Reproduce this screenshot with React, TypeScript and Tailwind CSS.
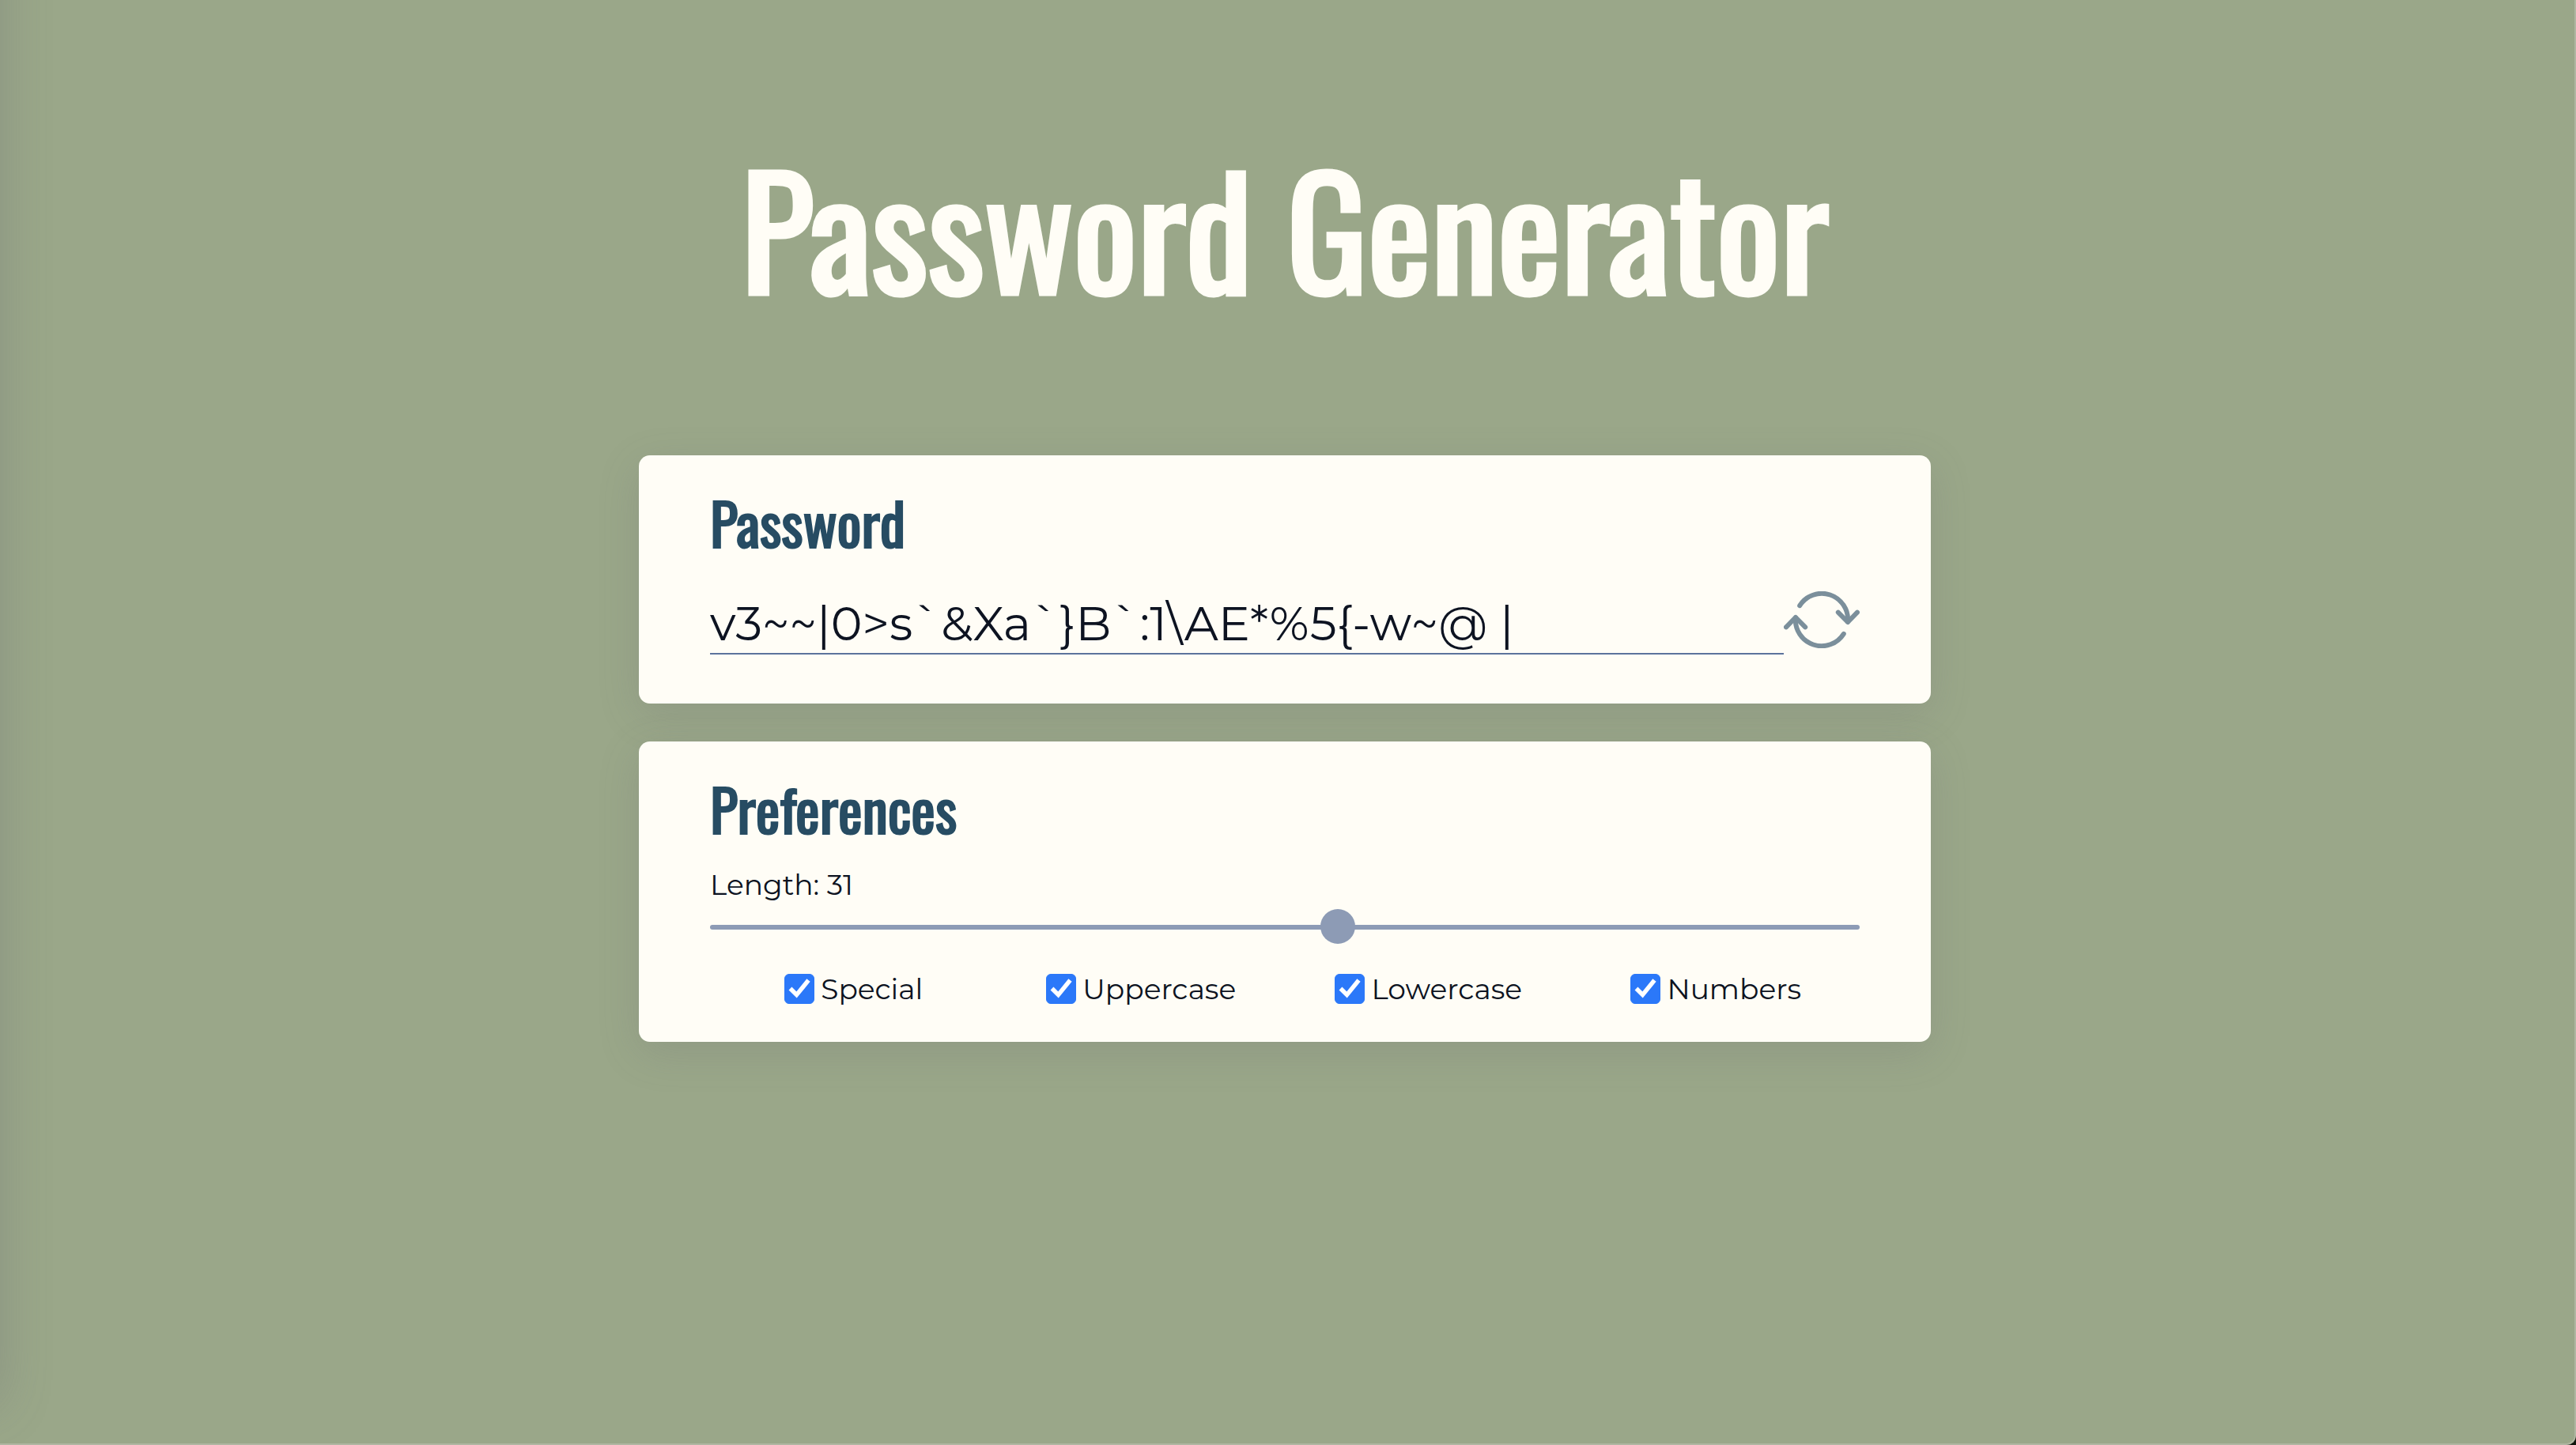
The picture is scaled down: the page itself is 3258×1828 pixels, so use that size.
import { useState } from "react";

const MIN_LENGTH = 8;
const MAX_LENGTH = 50;
const START_PASSWORD = "v3~~|0>s`&Xa`}B`:1\\AE*%5{-w~@ |";

const POOLS = {
  Special: " !\"#$%&'()*+,-./:;<=>?@[\\]^_`{|}~",
  Uppercase: "ABCDEFGHIJKLMNOPQRSTUVWXYZ",
  Lowercase: "abcdefghijklmnopqrstuvwxyz",
  Numbers: "0123456789",
};

type Pool = keyof typeof POOLS;
const POOL_NAMES = Object.keys(POOLS) as Pool[];

function generate(length: number, enabled: Record<Pool, boolean>) {
  const chars = POOL_NAMES.filter((name) => enabled[name]).map((name) => POOLS[name]).join("");
  if (!chars) return "";
  return Array.from({ length }, () => chars[Math.floor(Math.random() * chars.length)]).join("");
}

function RefreshIcon() {
  return (
    <svg viewBox="0 0 96 72" className="h-[72px] w-24" fill="none" stroke="currentColor" strokeWidth="6" strokeLinecap="round" strokeLinejoin="round" aria-hidden="true">
      <path d="M20.2 18.2A33 33 0 0 1 81 38.6" />
      <path d="M68.8 26.6 81 39 93 26.6" />
      <path d="M75.8 53.8A33 33 0 0 1 15 33.4" />
      <path d="M27.2 45.4 15 33 3 45.4" />
    </svg>
  );
}

function Card({ title, className, children }: { title: string; className: string; children: React.ReactNode }) {
  return (
    <section className={`rounded-[14px] bg-[#fffdf6] px-[90px] pt-12 shadow-[0_14px_52px_rgba(100,100,111,0.2)] ${className}`}>
      <h2 className="font-['Oswald','Open_Sans',sans-serif] text-[73px] leading-[72px] font-normal text-[#274c63] [-webkit-text-stroke:2px_#274c63]">
        {title}
      </h2>
      {children}
    </section>
  );
}

function CheckOption({ label, checked, onChange }: { label: string; checked: boolean; onChange: () => void }) {
  return (
    <label className="flex items-center justify-center gap-2 text-[36px] leading-[48px]">
      <span className="relative flex">
        <input
          type="checkbox"
          checked={checked}
          onChange={onChange}
          className="size-[38px] appearance-none rounded-md border border-[#2b78f9] bg-white checked:bg-[#2b78f9]"
        />
        {checked && (
          <svg viewBox="0 0 38 38" className="pointer-events-none absolute inset-0" fill="none" stroke="#fff" strokeWidth="5.5" aria-hidden="true">
            <path d="M7.5 18.5 15.5 26.5 30.5 8" />
          </svg>
        )}
      </span>
      {label}
    </label>
  );
}

export default function App() {
  const [length, setLength] = useState(31);
  const [password, setPassword] = useState(START_PASSWORD);
  const [enabled, setEnabled] = useState<Record<Pool, boolean>>({
    Special: true,
    Uppercase: true,
    Lowercase: true,
    Numbers: true,
  });

  const changeLength = (value: number) => {
    setLength(value);
    setPassword(generate(value, enabled));
  };

  const toggle = (name: Pool) => {
    const next = { ...enabled, [name]: !enabled[name] };
    setEnabled(next);
    setPassword(generate(length, next));
  };

  return (
    <div className="bg-[#10160d]">
      <main className="relative min-h-screen overflow-hidden rounded-br-xl border-r-2 border-b-2 border-[#b0b6a2] bg-[#9aa789] pt-[190px] pr-1.5 pb-48 font-['Montserrat','Inter',sans-serif] text-[#0d1321]">
        <div className="pointer-events-none absolute top-[-100px] right-full bottom-[50px] w-24 shadow-[0_0_64px_rgba(100,100,111,0.3)]" />
        <h1 className="text-center font-['Oswald','Open_Sans',sans-serif] text-[191px] leading-[192px] font-normal text-[#fffdf6] [-webkit-text-stroke:5px_#fffdf6]">
          Password Generator
        </h1>
        <div className="mx-auto mt-[194px] flex max-w-[1634px] flex-col gap-12">
          <Card title="Password" className="pb-[62px]">
            <div className="mt-[52px] flex items-end">
              <input
                type="text"
                aria-label="Generated password"
                readOnly
                value={password}
                className="h-[76px] min-w-0 flex-1 border-b-2 border-[#5c739c] bg-transparent pb-0.5 text-[60px] leading-[72px] outline-none"
              />
              <button type="button" aria-label="Generate a new password" onClick={() => setPassword(generate(length, enabled))} className="flex h-20 items-start text-[#7b8f9b]">
                <RefreshIcon />
              </button>
            </div>
          </Card>

          <Card title="Preferences" className="pb-[43px]">
            <label htmlFor="length" className="mt-[37px] block text-[36px] leading-[48px]">
              Length: {length}
            </label>
            <input
              id="length"
              type="range"
              min={MIN_LENGTH}
              max={MAX_LENGTH}
              value={length}
              onChange={(event) => changeLength(Number(event.target.value))}
              className="mt-2 block h-11 w-full appearance-none bg-transparent [&::-webkit-slider-runnable-track]:h-1.5 [&::-webkit-slider-runnable-track]:rounded-sm [&::-webkit-slider-runnable-track]:bg-[#8d9bb5] [&::-webkit-slider-thumb]:-mt-5 [&::-webkit-slider-thumb]:size-11 [&::-webkit-slider-thumb]:appearance-none [&::-webkit-slider-thumb]:rounded-full [&::-webkit-slider-thumb]:bg-[#8d9bb5]"
            />
            <div className="mt-8 grid grid-cols-4">
              {POOL_NAMES.map((name) => (
                <CheckOption key={name} label={name} checked={enabled[name]} onChange={() => toggle(name)} />
              ))}
            </div>
          </Card>
        </div>
      </main>
    </div>
  );
}
